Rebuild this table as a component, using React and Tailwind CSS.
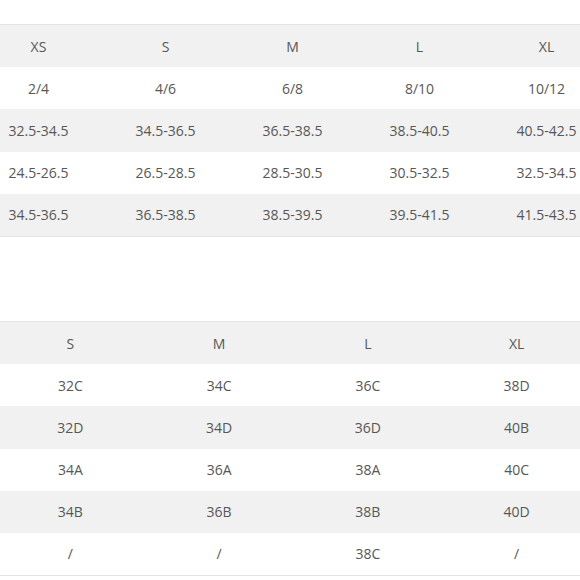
import React from "react";

const top = [
  ["XS", "S", "M", "L", "XL"],
  ["2/4", "4/6", "6/8", "8/10", "10/12"],
  ["32.5-34.5", "34.5-36.5", "36.5-38.5", "38.5-40.5", "40.5-42.5"],
  ["24.5-26.5", "26.5-28.5", "28.5-30.5", "30.5-32.5", "32.5-34.5"],
  ["34.5-36.5", "36.5-38.5", "38.5-39.5", "39.5-41.5", "41.5-43.5"],
];

const bottom = [
  ["S", "M", "L", "XL"],
  ["32C", "34C", "36C", "38D"],
  ["32D", "34D", "36D", "40B"],
  ["34A", "36A", "38A", "40C"],
  ["34B", "36B", "38B", "40D"],
  ["/", "/", "38C", "/"],
];

function Table({ rows, cols, className }) {
  return (
    <div className={"border-y border-[#e4e4e4] " + className}>
      {rows.map((r, i) => (
        <div
          key={i}
          className={
            (cols === 5 ? "grid grid-cols-5 " : "grid grid-cols-4 ") +
            "h-[42.2px] items-center " +
            (i % 2 === 0 ? "bg-[#f1f1f1]" : "bg-white")
          }
        >
          {r.map((c, j) => (
            <div key={j} className="text-center text-[14px] text-[#575757] whitespace-nowrap">
              {c}
            </div>
          ))}
        </div>
      ))}
    </div>
  );
}

export default function App() {
  return (
    <div
      className="w-[580px] h-[580px] overflow-hidden bg-white"
      style={{ fontFamily: '"Open Sans", sans-serif' }}
    >
      <div className="pt-[24px]">
        <Table rows={top} cols={5} className="ml-[-25px] w-[635px]" />
      </div>
      <div className="mt-[84px]">
        <Table rows={bottom} cols={4} className="ml-[-4px] w-[595px]" />
      </div>
    </div>
  );
}
